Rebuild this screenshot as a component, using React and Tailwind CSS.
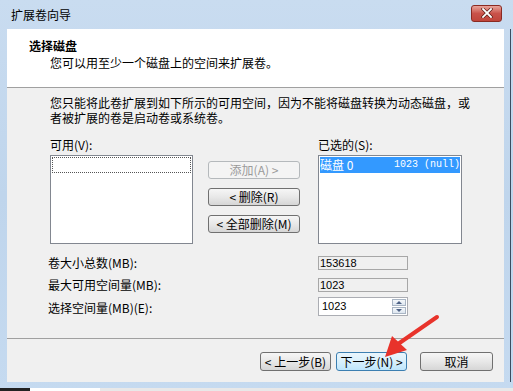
import React from 'react';

const cjk = { fontFamily: '"Noto Sans CJK SC", "Liberation Sans", sans-serif' };

function WinButton({ children, disabled, hot, className = '' }) {
  let look = 'border-[#707070] bg-gradient-to-b from-[#f6f6f6] via-[#e8e8e8] to-[#d6d6d6] text-black';
  if (disabled) look = 'border-[#b5b9bc] bg-[#f4f4f4] text-[#9a9a9a]';
  if (hot) look = 'border-[#3c7fb1] bg-gradient-to-b from-[#eaf6fd] via-[#d9f0fc] to-[#bee6fd] text-black';
  return (
    <div className={`flex items-center justify-center rounded-[3px] border text-[12px] leading-none ${look} ${className}`}>
      {children}
    </div>
  );
}

function App() {
  return (
    <div className="relative w-[513px] h-[391px] overflow-hidden flex flex-col bg-gradient-to-b from-[#c9dcf0] via-[#bfd5ec] to-[#c5daf0]" style={cjk}>
      {/* title bar */}
      <div className="h-[29px] flex items-center justify-between pl-[11px] pr-[11px]">
        <span className="text-[12px] text-black">扩展卷向导</span>
        <div className="w-[31px] h-[17px] mt-[-3px] rounded-[3px] border border-[#8a2a22] bg-gradient-to-b from-[#e8a59c] via-[#c9524a] to-[#c0453b] flex items-center justify-center">
          <svg width="12" height="10" viewBox="0 0 12 10">
            <path d="M2 1 L10 9 M10 1 L2 9" stroke="#5a1b15" strokeWidth="3.2" strokeLinecap="square" />
            <path d="M2 1 L10 9 M10 1 L2 9" stroke="#ffffff" strokeWidth="1.8" strokeLinecap="square" />
          </svg>
        </div>
      </div>

      <div className="flex flex-1 min-h-0">
        <div className="w-[7px]" />
        {/* client area */}
        <div className="w-[497px] flex flex-col bg-[#f0f0f0]">
          {/* header */}
          <div className="h-[59px] bg-white border-b border-[#a0a0a0] pl-[22px] pt-[9px]">
            <div className="text-[12px] font-bold leading-[16px] text-black">选择磁盘</div>
            <div className="text-[12px] leading-[16px] pl-[21px] mt-[1px] text-black">您可以用至少一个磁盘上的空间来扩展卷。</div>
          </div>

          {/* body */}
          <div className="h-[251px] border-b border-[#a0a0a0] pl-[43px] pt-[7px]">
            <div className="text-[12px] leading-[15px] text-black">
              <div>您只能将此卷扩展到如下所示的可用空间，因为不能将磁盘转换为动态磁盘，或</div>
              <div>者被扩展的卷是启动卷或系统卷。</div>
            </div>

            <div className="flex mt-[13px]">
              <div className="w-[143px] flex flex-col">
                <div className="text-[12px] leading-[14px] h-[17px]">可用(V):</div>
                <div className="h-[89px] border border-[#828790] bg-white p-[1px]">
                  <div className="h-[16px] border border-dotted border-[#555]" />
                </div>
              </div>

              <div className="w-[92px] ml-[15px] mt-[23px] flex flex-col gap-[9px]">
                <WinButton disabled className="h-[18px]">添加(A) &gt;</WinButton>
                <WinButton className="h-[18px]">&lt; 删除(R)</WinButton>
                <WinButton className="h-[18px]">&lt; 全部删除(M)</WinButton>
              </div>

              <div className="w-[144px] ml-[18px] flex flex-col">
                <div className="text-[12px] leading-[14px] h-[17px]">已选的(S):</div>
                <div className="h-[89px] border border-[#828790] bg-white p-[1px]">
                  <div className="h-[16px] bg-[#3399ff] text-white text-[12px] leading-[16px] flex whitespace-pre">
                    <span className="w-[77px]">磁盘 0</span>
                    <span style={{ fontFamily: '"Liberation Mono", monospace' }} className="text-[10px]">1023 (null)</span>
                  </div>
                </div>
              </div>
            </div>

            <div className="grid grid-cols-[270px_90px] items-center mt-[12px] gap-y-[8px] -ml-[2px] text-[12px]">
              <span className="leading-[14px]">卷大小总数(MB):</span>
              <div className="h-[14px] border border-[#a7a7a7] bg-[#f0f0f0] text-[11px] leading-[12px] pl-[1px]" style={{ fontFamily: '"Liberation Sans", sans-serif' }}>153618</div>
              <span className="leading-[14px]">最大可用空间量(MB):</span>
              <div className="h-[14px] border border-[#a7a7a7] bg-[#f0f0f0] text-[11px] leading-[12px] pl-[1px]" style={{ fontFamily: '"Liberation Sans", sans-serif' }}>1023</div>
              <span className="leading-[14px]">选择空间量(MB)(E):</span>
              <div className="h-[19px] -mt-[3px] border border-[#abadb3] bg-white flex items-center justify-between pl-[3px] pr-[1px]">
                <span className="text-[11px]" style={{ fontFamily: '"Liberation Sans", sans-serif' }}>1023</span>
                <div className="flex flex-col gap-[1px]">
                  <div className="w-[14px] h-[7px] border border-[#a9b5c4] bg-gradient-to-b from-[#f5f8fb] to-[#dde6ef] flex items-center justify-center">
                    <svg width="6" height="3" viewBox="0 0 6 3"><path d="M0 3 L3 0 L6 3 Z" fill="#4d6185" /></svg>
                  </div>
                  <div className="w-[14px] h-[7px] border border-[#a9b5c4] bg-gradient-to-b from-[#f5f8fb] to-[#dde6ef] flex items-center justify-center">
                    <svg width="6" height="3" viewBox="0 0 6 3"><path d="M0 0 L3 3 L6 0 Z" fill="#4d6185" /></svg>
                  </div>
                </div>
              </div>
            </div>
          </div>

          {/* footer */}
          <div className="flex-1 flex items-start pt-[13px] pl-[253px]">
            <WinButton className="w-[71px] h-[19px]">&lt; 上一步(B)</WinButton>
            <WinButton hot className="w-[71px] h-[19px] ml-[5px]">下一步(N) &gt;</WinButton>
            <WinButton className="w-[73px] h-[19px] ml-[13px]">取消</WinButton>
          </div>
        </div>
        <div className="w-[9px] flex">
          <div className="w-[6px]" />
          <div className="w-[1px] bg-[#3b4d61]" />
        </div>
      </div>

      <div className="h-[6px]" />
      <div className="h-[3px] bg-[#1a1a1a] flex">
        <div className="w-[30px] bg-[#222]" />
        <div className="w-[70px] bg-white" />
        <div className="flex-1 bg-[#e8e8e8]" />
      </div>

      {/* red arrow annotation */}
      <svg className="absolute left-0 top-0 pointer-events-none" width="513" height="391" viewBox="0 0 513 391">
        <path d="M437 317 L398 344" stroke="#e8332b" strokeWidth="4" strokeLinecap="round" />
        <path d="M385 357 L392 336 L407 350 Z" fill="#e8332b" />
      </svg>
    </div>
  );
}

export default App;
